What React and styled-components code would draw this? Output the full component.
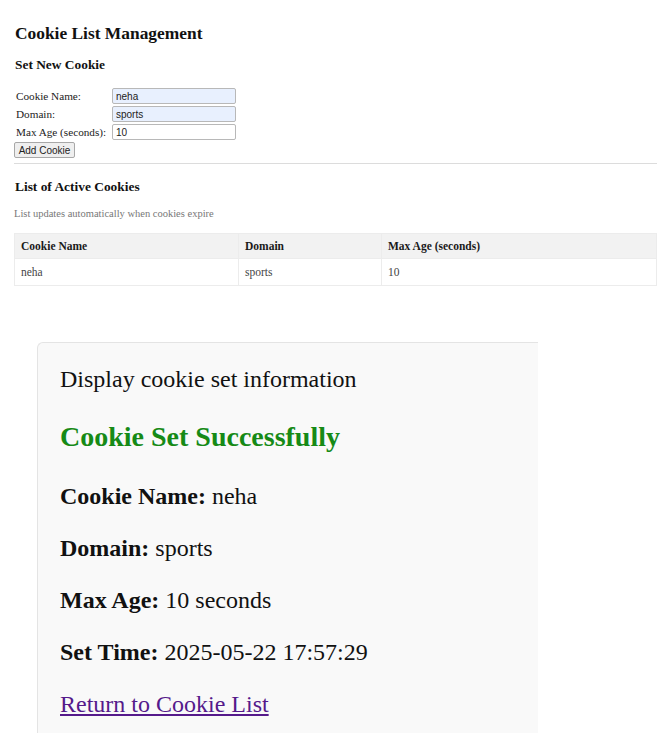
import React from 'react'
import styled, { createGlobalStyle } from 'styled-components'

const GlobalStyle = createGlobalStyle`
  html, body {
    margin: 0;
    padding: 0;
    background: #ffffff;
  }
  body {
    font-family: "Liberation Serif", "Times New Roman", serif;
    color: #111;
    width: 657px;
    height: 733px;
    overflow: hidden;
  }
`

const Page = styled.div`
  display: flex;
  flex-direction: column;
`

const ListSection = styled.section`
  padding: 23px 0 0 14px;
`

const MainTitle = styled.h1`
  font-size: 17.4px;
  font-weight: bold;
  margin: 0 0 0 1px;
  line-height: 20px;
`

const SubTitle = styled.h2`
  font-size: 13.4px;
  font-weight: bold;
  margin: ${({ top }) => top}px 0 0 1px;
  line-height: 14px;
`

const Form = styled.form`
  display: grid;
  grid-template-columns: 96px 124px;
  row-gap: 2px;
  align-items: center;
  margin-top: 16px;
  margin-left: 2px;
`

const Label = styled.label`
  font-size: 11.2px;
  line-height: 16px;
  color: #222;
`

const Input = styled.input`
  box-sizing: border-box;
  width: 124px;
  height: 16px;
  margin: 0;
  padding: 0 3px;
  font-family: "Liberation Sans", Arial, sans-serif;
  font-size: 10px;
  color: #222;
  border: 1px solid #b8b8b8;
  border-radius: 2px;
  background: ${({ filled }) => (filled ? '#e8f0fe' : '#ffffff')};
  outline: none;
`

const Button = styled.button`
  box-sizing: border-box;
  width: 61px;
  height: 16px;
  margin: 0 0 0 -2px;
  padding: 0;
  font-family: "Liberation Sans", Arial, sans-serif;
  font-size: 10px;
  color: #222;
  background: #efefef;
  border: 1px solid #a8a8a8;
  border-radius: 2px;
  grid-column: 1 / 2;
`

const Rule = styled.hr`
  border: none;
  border-top: 1px solid #dcdcdc;
  margin: 5px 0 0 0;
`

const Note = styled.p`
  font-size: 10.5px;
  color: #777;
  margin: 14px 0 0 0;
  line-height: 12px;
`

const Table = styled.table`
  border-collapse: collapse;
  table-layout: fixed;
  width: 643px;
  margin-top: 13px;
  font-size: 11.5px;
`

const HeadCell = styled.th`
  box-sizing: border-box;
  text-align: left;
  font-weight: bold;
  background: #f2f2f2;
  height: 25px;
  padding: 0 6px;
  border: 1px solid #ececec;
  width: ${({ w }) => (w ? `${w}px` : 'auto')};
  color: #1a1a1a;
`

const Cell = styled.td`
  height: 26px;
  padding: 0 6px;
  border: 1px solid #ececec;
  color: #444;
`

const InfoPanel = styled.div`
  margin: 56px 0 0 37px;
  width: 501px;
  height: 400px;
  box-sizing: border-box;
  background: #f9f9f9;
  border-top: 1px solid #e4e4e4;
  border-left: 1px solid #e4e4e4;
  border-top-left-radius: 6px;
  padding: 23px 0 0 22px;
  font-size: 24px;
`

const InfoLine = styled.p`
  margin: 0;
  line-height: 26px;
  height: ${({ h }) => h || 52}px;
`

const SuccessTitle = styled.h2`
  margin: 2px 0 0 0;
  color: #168a16;
  font-size: 28px;
  font-weight: bold;
  line-height: 30px;
  height: 61px;
`

const Key = styled.strong`
  font-weight: bold;
`

const BackLink = styled.a`
  color: #551a8b;
  text-decoration: underline;
`

const fields = [
  { label: 'Cookie Name:', value: 'neha', filled: true },
  { label: 'Domain:', value: 'sports', filled: true },
  { label: 'Max Age (seconds):', value: '10', filled: false },
]

const info = [
  { key: 'Cookie Name:', value: 'neha' },
  { key: 'Domain:', value: 'sports' },
  { key: 'Max Age:', value: '10 seconds' },
  { key: 'Set Time:', value: '2025-05-22 17:57:29' },
]

const App = () => (
  <Page>
    <GlobalStyle />
    <ListSection>
      <MainTitle>Cookie List Management</MainTitle>
      <SubTitle top={15}>Set New Cookie</SubTitle>
      <Form onSubmit={(e) => e.preventDefault()}>
        {fields.map((f) => (
          <React.Fragment key={f.label}>
            <Label>{f.label}</Label>
            <Input defaultValue={f.value} filled={f.filled} />
          </React.Fragment>
        ))}
        <Button type="submit">Add Cookie</Button>
      </Form>
      <Rule />
      <SubTitle top={16}>List of Active Cookies</SubTitle>
      <Note>List updates automatically when cookies expire</Note>
      <Table>
        <thead>
          <tr>
            <HeadCell w={224}>Cookie Name</HeadCell>
            <HeadCell w={143}>Domain</HeadCell>
            <HeadCell>Max Age (seconds)</HeadCell>
          </tr>
        </thead>
        <tbody>
          <tr>
            <Cell>neha</Cell>
            <Cell>sports</Cell>
            <Cell>10</Cell>
          </tr>
        </tbody>
      </Table>
    </ListSection>
    <InfoPanel>
      <InfoLine h={54}>Display cookie set information</InfoLine>
      <SuccessTitle>Cookie Set Successfully</SuccessTitle>
      {info.map((i) => (
        <InfoLine key={i.key}>
          <Key>{i.key}</Key> {i.value}
        </InfoLine>
      ))}
      <InfoLine>
        <BackLink href="#">Return to Cookie List</BackLink>
      </InfoLine>
    </InfoPanel>
  </Page>
)

export default App
